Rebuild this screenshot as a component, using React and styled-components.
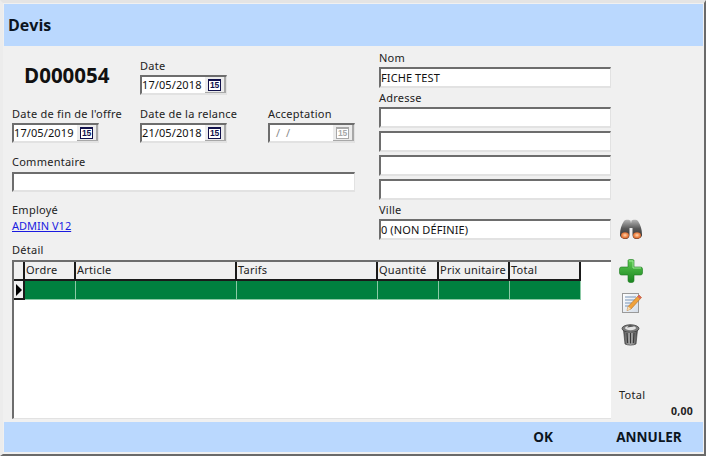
import React from "react";
import styled, { createGlobalStyle } from "styled-components";

const Global = createGlobalStyle`
  html, body { margin: 0; padding: 0; background: #f0f0f0; }
  * { box-sizing: border-box; }
`;

const Window = styled.div`
  width: 706px; height: 456px; display: flex; flex-direction: column;
  background: #f0f0f0; color: #111;
  font-family: "Noto Sans", sans-serif; font-size: 11px; letter-spacing: 0.25px;
  border-top: 3px solid #e4e4e4; border-left: 3px solid #ececec;
  border-right: 2px solid #6a6a6a; border-bottom: 2px solid #6a6a6a;
  padding: 1px 1px 2px 1px;
  overflow: hidden;
`;
const Band = styled.div`
  background: #bad8fe; flex: none; display: flex; align-items: center;
  font-family: "Open Sans", sans-serif; font-weight: 700; color: #0b1420; letter-spacing: 0;
`;
const Header = styled(Band)`
  height: 42px; padding-left: 4px; font-size: 16px;
`;
const Footer = styled(Band)`
  height: 30px; justify-content: flex-end; font-size: 13.5px; margin-top: 3px;
`;
const FootBtn = styled.div`
  width: ${p => p.$w}px; text-align: center; margin-right: ${p => p.$mr}px;
`;
const Body = styled.div`
  flex: 1; min-height: 0; display: flex; flex-direction: column; padding: 5px 0 0 8px;
`;
const Top = styled.div`
  display: flex; gap: 24px; height: 209px;
`;
const LeftCol = styled.div`
  width: 343px; display: flex; flex-direction: column; padding-top: 8px;
`;
const RightCol = styled.div`
  width: 300px; display: flex; flex-direction: column;
`;
const Row = styled.div`
  display: flex; gap: 41px; margin-bottom: ${p => p.$mb || 0}px;
`;
const Code = styled.div`
  width: 87px; padding: 4px 0 0 12px; font-family: "Open Sans", sans-serif; font-weight: 700; font-size: 20.5px; line-height: 24px; white-space: nowrap; letter-spacing: 0;
`;
const Field = styled.div`
  display: flex; flex-direction: column; width: ${p => p.$w ? p.$w + "px" : "auto"};
`;
const Label = styled.div`
  height: 15px; line-height: 13px; white-space: nowrap; margin-bottom: ${p => p.$mb ?? 2}px; color: #222;
`;
const Input = styled.div`
  flex: none; height: ${p => p.$h || 20}px; width: ${p => p.$w ? p.$w + "px" : "100%"}; background: #fff; display: flex; align-items: center; justify-content: space-between;
  border-top: 2px solid #6d6d6d; border-left: 2px solid #6d6d6d;
  border-right: 1px solid #e2e2e2; border-bottom: 2px solid #e2e2e2;
  padding-left: 0; color: ${p => p.$off ? "#8a8a8a" : "#111"}; white-space: pre; line-height: 16px; letter-spacing: 0.1px;
  margin-bottom: ${p => p.$mb || 0}px;
`;
const CalBtn = styled.div`
  width: 21px; height: 100%; background: #ececec; flex: none; padding-left: 3px;
  border-right: 2px solid #a8a8a8; border-bottom: 1px solid #a8a8a8;
  display: flex; align-items: center; justify-content: flex-start;
`;
const CalFace = styled.span`
  width: 13px; height: 12px; background: #fff;
  border: 1px solid ${p => p.$off ? "#a8a8a8" : "#10104a"}; border-top-width: 2px;
  color: ${p => p.$off ? "#a8a8a8" : "#10104a"}; font: 700 8.5px/9px "Liberation Sans", sans-serif; text-align: center; letter-spacing: -0.3px;
`;
const Link = styled.a`
  color: #1a1ae0; text-decoration: underline; line-height: 13px; height: 15px; display: block; margin-bottom: 9px; letter-spacing: 0;
`;
const VilleRow = styled.div`
  display: flex; align-items: flex-start; gap: 8px;
`;
const Detail = styled.div`
  flex: 1; min-height: 0; display: flex;
`;
const Grid = styled.div`
  width: 599px; background: #fff; border-top: 2px solid #6d6d6d; border-left: 2px solid #6d6d6d; border-bottom: 1px solid #e2e2e2;
`;
const Tr = styled.div`
  display: flex; height: 19px;
`;
const Th = styled.div`
  width: ${p => p.$w}px; flex: none; background: #f0f0f0; border-right: 2px solid #1a1a1a; border-bottom: 2px solid #1a1a1a; padding-left: 1px; line-height: 16px; white-space: nowrap; overflow: hidden; color: #222;
`;
const Td = styled.div`
  width: ${p => p.$w}px; flex: none; background: #00803f; border-right: 1px solid #8cc9a6; border-bottom: 1px solid #8cc9a6;
`;
const Indicator = styled.div`
  width: ${p => p.$w}px; flex: none; background: #f0f0f0; border-right: 2px solid #1a1a1a; border-bottom: 2px solid #1a1a1a; display: flex; align-items: center; justify-content: center;
  &::before { content: ""; display: ${p => p.$arrow ? "block" : "none"}; border-left: 6px solid #000; border-top: 6px solid transparent; border-bottom: 6px solid transparent; }
`;
const Side = styled.div`
  flex: 1; display: flex; flex-direction: column; padding-left: 8px;
`;
const Tools = styled.div`
  display: flex; flex-direction: column; align-items: flex-start; gap: 10px; margin-top: -1px;
`;
const TotalBox = styled.div`
  margin-top: auto; display: flex; flex-direction: column; padding-bottom: 1px;
`;
const TotalVal = styled.div`
  text-align: right; padding-right: 10px; font-weight: 700; font-size: 10.5px; line-height: 14px; color: #222;
`;

const Cal = ({ off }) => (
  <CalBtn><CalFace $off={off}>15</CalFace></CalBtn>
);

const DateField = ({ label, value, off }) => (
  <Field $w={87}>
    <Label $mb={1}>{label}</Label>
    <Input $off={off}><span>{value}</span><Cal off={off} /></Input>
  </Field>
);

const Binoculars = () => (
  <svg width="24" height="22" viewBox="0 0 24 22">
    <defs>
      <linearGradient id="bb" x1="0" x2="0" y1="0" y2="1"><stop offset="0" stopColor="#b4b4b4" /><stop offset="0.45" stopColor="#5a5a5a" /><stop offset="1" stopColor="#2a2a2a" /></linearGradient>
      <radialGradient id="bl" cx="0.5" cy="0.45" r="0.6"><stop offset="0" stopColor="#fbd7b4" /><stop offset="0.55" stopColor="#f0884a" /><stop offset="1" stopColor="#b9501f" /></radialGradient>
    </defs>
    <path d="M5 2c1-1.500 5-1.500 6.500-.5l.5 3 .5-3C14 .5 18 .5 19 2c2.500 4 4 8 4 14 0 2-3 4-5.500 4S13.500 18 13.500 16V9h-3v7c0 2-1.500 4-4 4S1 18 1 16C1 10 2.500 6 5 2z" fill="url(#bb)" />
    <ellipse cx="6" cy="16.500" rx="4" ry="3.200" fill="url(#bl)" />
    <ellipse cx="18" cy="16.500" rx="4" ry="3.200" fill="url(#bl)" />
  </svg>
);
const Plus = () => (
  <svg width="24" height="24" viewBox="0 0 24 24">
    <defs>
      <linearGradient id="pg" x1="0" x2="0" y1="0" y2="1"><stop offset="0" stopColor="#5ecb52" /><stop offset="1" stopColor="#1a8420" /></linearGradient>
    </defs>
    <path d="M9 1.500A1.500 1.500 0 0 1 10.500.5h3A1.500 1.500 0 0 1 15 1.500V8h6.500A2 2 0 0 1 23.500 10v4a2 2 0 0 1-2 2H15v5.500a2 2 0 0 1-2 2h-2a2 2 0 0 1-2-2V16H2.500a2 2 0 0 1-2-2v-4a2 2 0 0 1 2-2H9z" fill="url(#pg)" stroke="#1c7a20" strokeWidth="0.6" />
    <path d="M10 2h4v7h8" fill="none" stroke="#9ae694" strokeWidth="1" />
  </svg>
);
const Note = () => (
  <svg width="24" height="20" viewBox="0 0 24 20">
    <defs>
      <linearGradient id="ng" x1="0" x2="1" y1="0" y2="1"><stop offset="0" stopColor="#ffffff" /><stop offset="1" stopColor="#d4dde8" /></linearGradient>
    </defs>
    <rect x="3.500" y="0.500" width="16" height="19" fill="url(#ng)" stroke="#9a9a9a" />
    <path d="M6 4h11M6 7h10M6 10h7M6 13h5" stroke="#7b96b8" strokeWidth="1" />
    <path d="M20 2l2.500 2.500L12 16l-4 1.500 1.200-4z" fill="#f0a23c" stroke="#b06a1e" strokeWidth="0.6" />
    <path d="M20 2l2.500 2.500-1.600 1.600-2.500-2.500z" fill="#d8605c" />
    <path d="M8 17.500l1.200-4 2.800 2.500z" fill="#f3dcb8" />
  </svg>
);
const Trash = () => (
  <svg width="24" height="23" viewBox="0 0 24 23">
    <defs>
      <linearGradient id="tg" x1="0" x2="1" y1="0" y2="0"><stop offset="0" stopColor="#555" /><stop offset="0.5" stopColor="#b4b4b4" /><stop offset="1" stopColor="#4a4a4a" /></linearGradient>
    </defs>
    <path d="M4.500 7h14l-1.500 14c-3 1.500-8 1.500-11 0z" fill="url(#tg)" stroke="#333" strokeWidth="0.6" />
    <path d="M8 10l.6 10M11.500 10v10.500M15 10l-.6 10" stroke="#3a3a3a" strokeWidth="1.200" />
    <ellipse cx="11.500" cy="5.500" rx="8.500" ry="3.800" fill="#7c7c7c" stroke="#333" strokeWidth="0.7" />
    <ellipse cx="11.500" cy="5" rx="5.500" ry="2.200" fill="#e2e2e2" />
    <path d="M8 4.500l3-3 4 2z" fill="#555" />
  </svg>
);

const cols = [
  ["Ordre", 51], ["Article", 161], ["Tarifs", 141], ["Quantité", 61], ["Prix unitaire", 71], ["Total", 71],
];

export default function App() {
  return (
    <Window>
      <Global />
      <Header>Devis</Header>
      <Body>
        <Top>
          <LeftCol>
            <Row $mb={12}>
              <Code>D000054</Code>
              <DateField label="Date" value="17/05/2018" />
            </Row>
            <Row $mb={12}>
              <DateField label="Date de fin de l'offre" value="17/05/2019" />
              <DateField label="Date de la relance" value="21/05/2018" />
              <DateField label="Acceptation" value="  /  /" off />
            </Row>
            <Field>
              <Label>Commentaire</Label>
              <Input $mb={11} />
            </Field>
            <Label $mb={1}>Employé</Label>
            <Link>ADMIN V12</Link>
            <Label $mb={2}>Détail</Label>
          </LeftCol>
          <RightCol>
            <Label $mb={1}>Nom</Label>
            <Input $w={232} $h={21} $mb={3}>FICHE TEST</Input>
            <Label $mb={1}>Adresse</Label>
            <Input $w={232} $h={21} $mb={3} />
            <Input $w={232} $h={21} $mb={3} />
            <Input $w={232} $h={21} $mb={3} />
            <Input $w={232} $h={21} $mb={3} />
            <Label $mb={1}>Ville</Label>
            <VilleRow>
              <Input $w={232} $h={21}>0 (NON DÉFINIE)</Input>
              <Binoculars />
            </VilleRow>
          </RightCol>
        </Top>
        <Detail>
          <Grid>
            <Tr>
              <Indicator $w={11} />
              {cols.map(([t, w]) => <Th key={t} $w={w}>{t}</Th>)}
            </Tr>
            <Tr>
              <Indicator $w={11} $arrow />
              {cols.map(([t, w]) => <Td key={t} $w={w} />)}
            </Tr>
          </Grid>
          <Side>
            <Tools>
              <Plus />
              <Note />
              <Trash />
            </Tools>
            <TotalBox>
              <Label $mb={1}>Total</Label>
              <TotalVal>0,00</TotalVal>
            </TotalBox>
          </Side>
        </Detail>
      </Body>
      <Footer>
        <FootBtn $w={50} $mr={41}>OK</FootBtn>
        <FootBtn $w={80} $mr={14}>ANNULER</FootBtn>
      </Footer>
    </Window>
  );
}
